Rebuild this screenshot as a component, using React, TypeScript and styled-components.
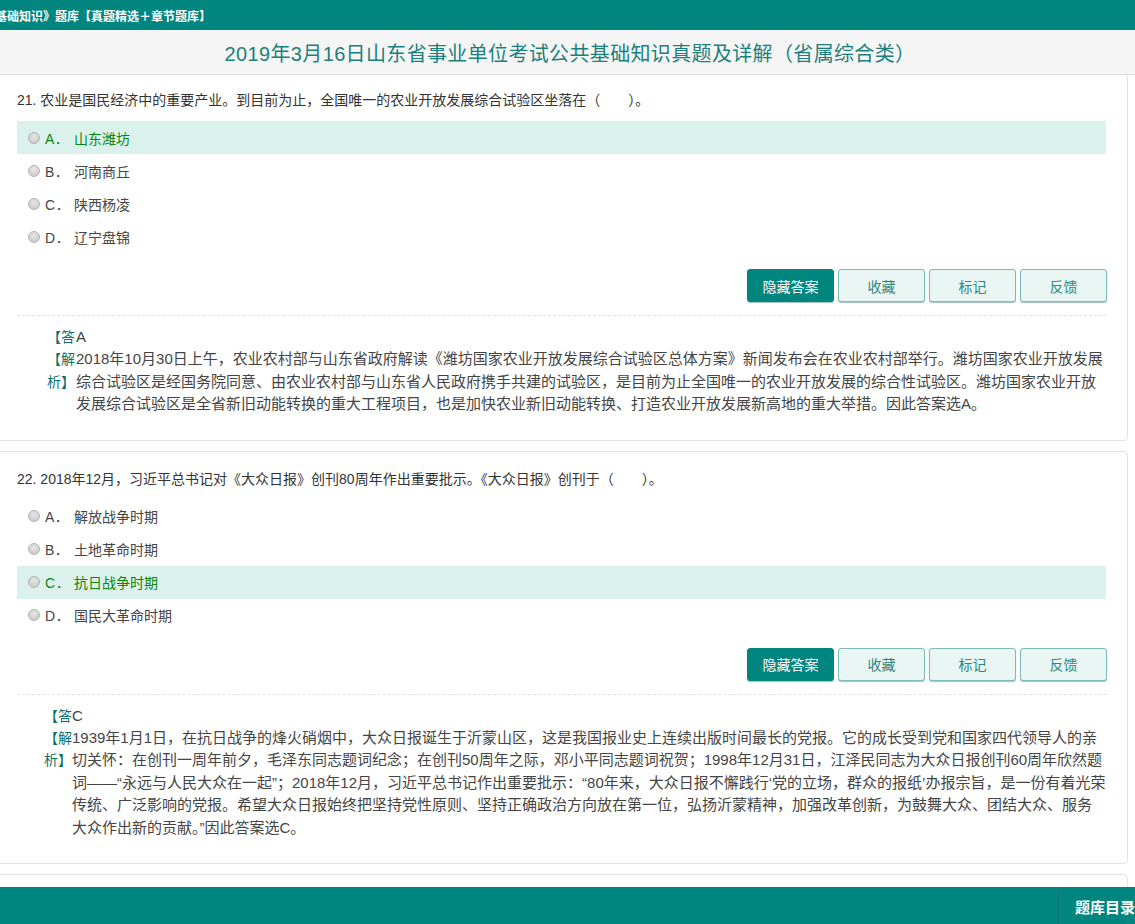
import styled, { createGlobalStyle } from 'styled-components'

/**
 * Data
 */
const questions = [
  {
    title: '21. 农业是国民经济中的重要产业。到目前为止，全国唯一的农业开放发展综合试验区坐落在（\u3000\u3000）。',
    options: [
      { letter: 'A', text: '山东潍坊' },
      { letter: 'B', text: '河南商丘' },
      { letter: 'C', text: '陕西杨凌' },
      { letter: 'D', text: '辽宁盘锦' },
    ],
    correct: 'A',
    indent: 47,
    analysis: [
      '2018年10月30日上午，农业农村部与山东省政府解读《潍坊国家农业开放发展综合试验区总体方案》新闻发布会在农业农村部举行。潍坊国家农业开放发展',
      '综合试验区是经国务院同意、由农业农村部与山东省人民政府携手共建的试验区，是目前为止全国唯一的农业开放发展的综合性试验区。潍坊国家农业开放',
      '发展综合试验区是全省新旧动能转换的重大工程项目，也是加快农业新旧动能转换、打造农业开放发展新高地的重大举措。因此答案选A。',
    ],
  },
  {
    title: '22. 2018年12月，习近平总书记对《大众日报》创刊80周年作出重要批示。《大众日报》创刊于（\u3000\u3000）。',
    options: [
      { letter: 'A', text: '解放战争时期' },
      { letter: 'B', text: '土地革命时期' },
      { letter: 'C', text: '抗日战争时期' },
      { letter: 'D', text: '国民大革命时期' },
    ],
    correct: 'C',
    indent: 44,
    analysis: [
      '1939年1月1日，在抗日战争的烽火硝烟中，大众日报诞生于沂蒙山区，这是我国报业史上连续出版时间最长的党报。它的成长受到党和国家四代领导人的亲',
      '切关怀：在创刊一周年前夕，毛泽东同志题词纪念；在创刊50周年之际，邓小平同志题词祝贺；1998年12月31日，江泽民同志为大众日报创刊60周年欣然题',
      '词——“永远与人民大众在一起”；2018年12月，习近平总书记作出重要批示：“80年来，大众日报不懈践行‘党的立场，群众的报纸’办报宗旨，是一份有着光荣',
      '传统、广泛影响的党报。希望大众日报始终把坚持党性原则、坚持正确政治方向放在第一位，弘扬沂蒙精神，加强改革创新，为鼓舞大众、团结大众、服务',
      '大众作出新的贡献。”因此答案选C。',
    ],
  },
]

const actions = ['收藏', '标记', '反馈']

/**
 * Component
 */
const App = () => (
  <Page>
    <GlobalStyle />
    <TopBar>
      <TopBarText>基础知识》题库【真题精选＋章节题库】</TopBarText>
    </TopBar>
    <TitleBand>2019年3月16日山东省事业单位考试公共基础知识真题及详解（省属综合类）</TitleBand>
    <CardList>
      {questions.map((q) => (
        <Card key={q.title}>
          <Question>{q.title}</Question>
          <Options>
            {q.options.map((o) => (
              <Option key={o.letter} $correct={o.letter === q.correct}>
                <Radio />
                <OptionLetter>{o.letter}．</OptionLetter>
                <span>{o.text}</span>
              </Option>
            ))}
          </Options>
          <Actions>
            <ActionButton $primary>隐藏答案</ActionButton>
            {actions.map((a) => <ActionButton key={a}>{a}</ActionButton>)}
          </Actions>
          <Answer $indent={q.indent}>
            <AnswerLabel>【答</AnswerLabel>
            <AnswerText>{q.correct}</AnswerText>
            <AnswerLabel>【解析】</AnswerLabel>
            <AnswerText>
              {q.analysis.map((line) => <AnalysisLine key={line}>{line}</AnalysisLine>)}
            </AnswerText>
          </Answer>
        </Card>
      ))}
      <EmptyCard />
    </CardList>
    <BottomBar>
      <CatalogButton>题库目录</CatalogButton>
    </BottomBar>
  </Page>
)

/**
 * Styled Component
 */
const GlobalStyle = createGlobalStyle`
  html, body {
    margin: 0;
    padding: 0;
    background: #fff;
    overflow: hidden;
  }

  * {
    box-sizing: border-box;
  }
`

const Page = styled.div`
  width: 1135px;
  height: 924px;
  overflow: hidden;
  font-family: "Liberation Sans", "Noto Sans CJK SC", sans-serif;
  font-size: 14px;
  color: #333;
  background: #fff;
`

const TopBar = styled.div`
  height: 30px;
  background: #00857f;
  display: flex;
  align-items: center;
  overflow: hidden;
`

const TopBarText = styled.div`
  margin-left: -5px;
  color: #fff;
  font-size: 12px;
  font-weight: 700;
  white-space: nowrap;
`

const TitleBand = styled.div`
  position: relative;
  z-index: 1;
  height: 45px;
  background: #f5f5f5;
  border-bottom: 1px solid #ddd;
  display: flex;
  align-items: center;
  justify-content: center;
  padding-left: 5px;
  font-size: 20px;
  letter-spacing: 0.35px;
  color: #1b807c;
  white-space: nowrap;
`

const CardList = styled.div`
  display: flex;
  flex-direction: column;
  gap: 10px;
  width: 1138px;
  margin: -3px 0 0 -10px;
`

const Card = styled.div`
  background: #fff;
  border: 1px solid #e3e3e3;
  border-radius: 4px;
  padding: 16px 21px 24px 26px;
`

const EmptyCard = styled(Card)`
  height: 60px;
`

const Question = styled.div`
  height: 22px;
  line-height: 22px;
  margin-bottom: 10px;
  white-space: nowrap;
`

const Options = styled.div`
  display: flex;
  flex-direction: column;
`

const Option = styled.div<{ $correct?: boolean }>`
  height: 33px;
  display: flex;
  align-items: center;
  padding-left: 11px;
  background: ${(p) => (p.$correct ? '#dbf2ec' : 'transparent')};
  color: ${(p) => (p.$correct ? '#0a8510' : '#444')};
`

const Radio = styled.span`
  width: 12px;
  height: 12px;
  border-radius: 50%;
  border: 1px solid #b4b4b4;
  background: radial-gradient(circle at 50% 35%, #e6e6e6, #c4c4c4);
  margin-right: 5px;
`

const OptionLetter = styled.span`
  width: 29px;
  letter-spacing: 0.5px;
`

const Actions = styled.div`
  display: flex;
  justify-content: flex-end;
  gap: 4px;
  margin: 16px -1px 13px 0;
  padding-bottom: 0;
`

const ActionButton = styled.button<{ $primary?: boolean }>`
  width: 87px;
  height: 33px;
  padding: 0;
  font-family: inherit;
  font-size: 14px;
  border-radius: 3px;
  border: 1px solid ${(p) => (p.$primary ? '#00857f' : '#7cbcb8')};
  box-shadow: 0 1px 1px rgba(0, 80, 76, 0.35);
  background: ${(p) => (p.$primary ? '#00857f' : '#e9f6f4')};
  color: ${(p) => (p.$primary ? '#fff' : '#2f8783')};
`

const Answer = styled.div<{ $indent: number }>`
  display: grid;
  grid-template-columns: 28px 1fr;
  column-gap: ${(p) => (p.$indent === 47 ? 1 : 0)}px;
  border-top: 1px dashed #e2e2e2;
  margin-right: -1px;
  padding: 10px 0 0 ${(p) => p.$indent - 17}px;
  font-size: 15px;
  line-height: 22.4px;
`

const AnswerLabel = styled.div`
  font-size: 14px;
  color: #0f6f68;
`

const AnswerText = styled.div`
  color: #444;
`

const AnalysisLine = styled.div`
  white-space: nowrap;
`

const BottomBar = styled.div`
  position: fixed;
  left: 0;
  right: 0;
  bottom: 0;
  height: 37px;
  background: #00857f;
  display: flex;
  justify-content: flex-end;
  overflow: hidden;
`

const CatalogButton = styled.div`
  flex: 0 0 68px;
  border-left: 1px solid #0a7570;
  padding-left: 16px;
  line-height: 42px;
  color: #fff;
  font-size: 15px;
  font-weight: 700;
  white-space: nowrap;
`

export default App
